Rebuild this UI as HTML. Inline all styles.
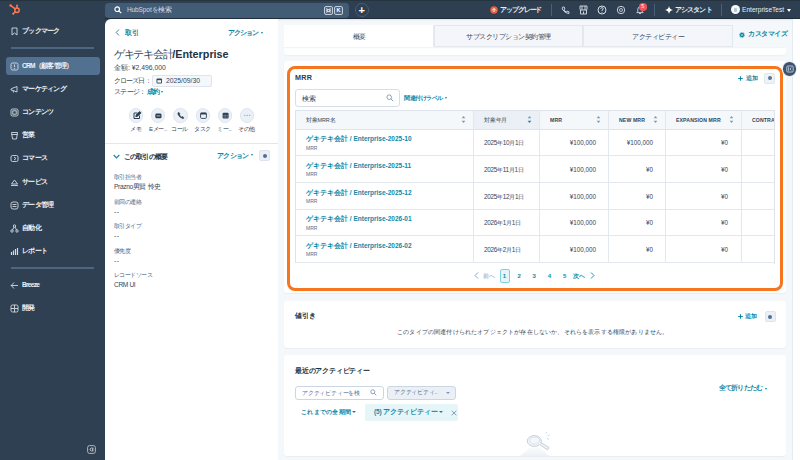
<!DOCTYPE html>
<html lang="ja">
<head>
<meta charset="utf-8">
<style>
*{box-sizing:border-box;margin:0;padding:0}
html,body{width:800px;height:460px;overflow:hidden}
body{position:relative;background:#2f4052;font-family:"Liberation Sans",sans-serif;color:#33475b;font-size:8px}
.abs{position:absolute}
.t{position:absolute;white-space:nowrap;line-height:1}
/* top bar */
#top{left:0;top:0;width:800px;height:19px;background:#2e3f51}
#search{left:105px;top:2.5px;width:244px;height:15px;background:#435c76;border-radius:4px}
.kbd{position:absolute;top:3.5px;width:9px;height:8.5px;border:1px solid #c3cdd8;border-radius:2px;background:#4d6784;color:#fff;font-size:5.5px;font-weight:bold;text-align:center;line-height:6.5px}
#plus{left:354.5px;top:2.5px;width:14.5px;height:14.5px;border:1px solid #465d76;border-radius:50%;color:#fff;font-size:11px;font-weight:bold;text-align:center;line-height:12.5px}
.tw{color:#e9eef3;font-size:6.5px}
.vdiv{position:absolute;top:3.5px;width:1.3px;height:12px;background:#4a6079}
/* sidebar */
#side{left:0;top:19px;width:105px;height:441px;background:#2f4052}
.si{position:absolute;left:22px;color:#f0f3f7;font-size:6.6px;font-weight:bold;letter-spacing:-0.75px;line-height:1;white-space:nowrap}
.sic{position:absolute;left:11px;width:8px;height:8px;border:1px solid #c4ccd5;border-radius:2px}
.hr{position:absolute;left:11px;width:83px;height:1.5px;background:#4d6580}

.act{position:absolute;top:89.3px;width:14.4px;height:14.4px;border-radius:50%;background:#eaf0f6;border:1px solid #dde6ef}
.al{top:107px;color:#33475b;font-size:6px;letter-spacing:-0.3px}
.fl{left:9px;color:#48637f;font-size:5.8px;letter-spacing:-0.55px}
.fv{left:9px;color:#33475b;font-size:6.6px;letter-spacing:-0.35px}
.tab{top:5.5px;height:22px;border:1px solid #e3e8ee;background:#f4f6f9;color:#33475b;font-size:6.5px;text-align:center;line-height:21px;letter-spacing:-0.5px}
.pg{top:254px;color:#0e89a8;font-size:6px;font-weight:bold}
</style>
</head>
<body>
<div id="top" class="abs">
  <div class="abs" style="left:0;top:0;width:800px;height:1.3px;background:#26343f"></div><svg class="abs" style="left:9px;top:4px" width="12" height="11" viewBox="0 0 12 11"><g stroke="#f9794f" stroke-width="1.5" fill="none" stroke-linecap="round"><circle cx="8" cy="6.3" r="2.2"/><line x1="8" y1="4" x2="8" y2="1.8"/><line x1="6.2" y1="4.9" x2="1.8" y2="1.6"/><line x1="6.4" y1="7.9" x2="4.3" y2="9.6"/></g><g fill="#f9794f"><circle cx="1.6" cy="1.4" r="1.2"/><circle cx="4.2" cy="9.7" r="1"/><circle cx="8" cy="1.3" r="0.9"/></g></svg>
  <div id="search" class="abs">
    <svg class="abs" style="left:9px;top:3.5px" width="8" height="8" viewBox="0 0 8 8"><circle cx="3.2" cy="3.2" r="2.3" stroke="#fff" stroke-width="1.2" fill="none"/><line x1="4.9" y1="4.9" x2="7.2" y2="7.2" stroke="#fff" stroke-width="1.2"/></svg>
    <div class="t" style="left:22px;top:4.5px;color:#d0dae4;font-size:6.5px;letter-spacing:-0.1px">HubSpotを検索</div>
    <div class="kbd" style="left:219px"><svg style="position:absolute;left:1.3px;top:1.2px" width="5" height="5" viewBox="0 0 5 5"><path d="M1.5 1.5 L3.5 1.5 L3.5 3.5 L1.5 3.5 Z M1.5 1.5 A0.8 0.8 0 1 0 0.7 2.3 M3.5 1.5 A0.8 0.8 0 1 1 4.3 2.3 M3.5 3.5 A0.8 0.8 0 1 0 4.3 2.7 M1.5 3.5 A0.8 0.8 0 1 1 0.7 2.7" fill="none" stroke="#fff" stroke-width="0.7"/></svg></div>
    <div class="kbd" style="left:229px">K</div>
  </div>
  <div id="plus" class="abs">+</div>
  <svg class="abs" style="left:490px;top:6px" width="8" height="8" viewBox="0 0 8 8"><circle cx="4" cy="4" r="3.7" fill="#e8613e"/><path d="M2 4.5 L4 2.5 L6 4.5 M4 2.5 L4 6" stroke="#fff" stroke-width="0.9" fill="none"/></svg>
  <div class="t tw" style="left:500px;top:6.5px;letter-spacing:-1.1px;font-weight:bold">アップグレード</div>
  <div class="vdiv" style="left:551px"></div>
  <svg class="abs" style="left:561px;top:5.5px" width="9" height="9" viewBox="0 0 9 9"><path d="M1.8 1 L3.2 1 L3.9 3 L3 3.7 Q3.8 5.4 5.3 6 L6 5.1 L8 5.8 L7.9 7.6 Q4 7.6 1.2 3 Q1 1.6 1.8 1 Z" fill="none" stroke="#d7dfe8" stroke-width="0.9"/></svg>
  <svg class="abs" style="left:579px;top:5px" width="9" height="10" viewBox="0 0 9 10"><path d="M1 1 L8 1 L8 4 Q8 5 7 5 L2 5 Q1 5 1 4 Z" fill="none" stroke="#d7dfe8" stroke-width="0.9"/><path d="M1.5 5 L1.5 9 L7.5 9 L7.5 5 M3 1 L3 5 M6 1 L6 5 M4.5 6.5 L4.5 9" fill="none" stroke="#d7dfe8" stroke-width="0.9"/></svg>
  <svg class="abs" style="left:597px;top:5px" width="10" height="10" viewBox="0 0 10 10"><circle cx="5" cy="5" r="4" fill="none" stroke="#d7dfe8" stroke-width="1"/><path d="M3.6 3.8 Q3.8 2.6 5 2.6 Q6.3 2.6 6.3 3.8 Q6.3 4.6 5 5 L5 6" fill="none" stroke="#d7dfe8" stroke-width="0.9"/><circle cx="5" cy="7.3" r="0.5" fill="#d7dfe8"/></svg>
  <svg class="abs" style="left:616px;top:5px" width="10" height="10" viewBox="0 0 10 10"><circle cx="5" cy="5" r="3.7" fill="none" stroke="#d7dfe8" stroke-width="0.9"/><circle cx="5" cy="5" r="1.5" fill="none" stroke="#d7dfe8" stroke-width="0.8"/></svg>
  <svg class="abs" style="left:635px;top:5px" width="10" height="10" viewBox="0 0 10 10"><path d="M1.8 7.6 L2.8 6.5 L2.8 4.3 Q3 1.8 5 1.8 Q7 1.8 7.2 4.3 L7.2 6.5 L8.2 7.6 Z M4 8.3 Q5 9.4 6 8.3" fill="none" stroke="#d7dfe8" stroke-width="0.9"/></svg>
  <div class="abs" style="left:639px;top:3px;width:7.5px;height:7.5px;border-radius:50%;background:#f2545b;color:#fff;font-size:5px;text-align:center;line-height:7.5px">5</div>
  <div class="vdiv" style="left:654px"></div>
  <svg class="abs" style="left:664.5px;top:5.5px" width="8" height="8" viewBox="0 0 8 8"><path d="M4 0 Q4.5 3.5 8 4 Q4.5 4.5 4 8 Q3.5 4.5 0 4 Q3.5 3.5 4 0 Z" fill="#fff"/></svg>
  <div class="t tw" style="left:675px;top:6.5px;letter-spacing:-0.9px;font-weight:bold">アシスタント</div>
  <div class="vdiv" style="left:721px"></div>
  <div class="abs" style="left:731px;top:5px;width:9px;height:9px;border-radius:50%;background:#f5f8fa"></div>
  <div class="abs" style="left:734px;top:7.5px;width:3px;height:4px;border-radius:1px;background:#b9c6d4"></div>
  <div class="t tw" style="left:742px;top:6.5px;font-size:6.6px">EnterpriseTest</div>
  <div class="abs" style="left:787px;top:8.5px;width:0;height:0;border-left:2.5px solid transparent;border-right:2.5px solid transparent;border-top:3px solid #fff"></div>
</div>

<div class="abs" style="left:105px;top:18px;width:695px;height:1px;background:#1f2d3b"></div>
<div class="abs" style="left:104px;top:18px;width:1px;height:442px;background:#263544"></div>
<div id="side" class="abs">
<svg class="abs" style="left:10px;top:8px" width="9" height="9" viewBox="0 0 9 9"><g fill="none" stroke="#d3dae2" stroke-width="0.9"><path d="M2 1 L7 1 L7 8 L4.5 6 L2 8 Z"/></g></svg>
<div class="si" style="top:9px">ブックマーク</div>
<div class="hr" style="top:28px"></div>
<div class="abs" style="left:5.5px;top:37.5px;width:94px;height:18px;border-radius:3px;background:#52708f"></div>
<svg class="abs" style="left:10px;top:43px" width="9" height="9" viewBox="0 0 9 9"><g fill="none" stroke="#d3dae2" stroke-width="0.9"><rect x="1" y="1" width="7" height="7" rx="1.5"/><path d="M4.5 2.5 L4.5 5" /><circle cx="4.5" cy="6.3" r="0.3"/></g></svg>
<div class="si" style="top:44px">CRM（顧客管理）</div>
<svg class="abs" style="left:10px;top:66px" width="9" height="9" viewBox="0 0 9 9"><g fill="none" stroke="#d3dae2" stroke-width="0.9"><path d="M1 4 L3 3 L7 1.5 L7 7 L3 5.5 L1 5 Z M3 5.5 L3.5 7.5"/></g></svg>
<div class="si" style="top:67px">マーケティング</div>
<svg class="abs" style="left:10px;top:89px" width="9" height="9" viewBox="0 0 9 9"><g fill="none" stroke="#d3dae2" stroke-width="0.9"><rect x="1" y="1" width="7" height="7" rx="1.5"/><rect x="2.8" y="2.8" width="3.4" height="3.4"/></g></svg>
<div class="si" style="top:90px">コンテンツ</div>
<svg class="abs" style="left:10px;top:112px" width="9" height="9" viewBox="0 0 9 9"><g fill="none" stroke="#d3dae2" stroke-width="0.9"><path d="M1.5 1.5 L7.5 1.5 L6.5 8 L2.5 8 Z M1.5 3.5 L7.5 3.5"/></g></svg>
<div class="si" style="top:113px">営業</div>
<svg class="abs" style="left:10px;top:135px" width="9" height="9" viewBox="0 0 9 9"><g fill="none" stroke="#d3dae2" stroke-width="0.9"><rect x="1" y="1.5" width="7" height="6" rx="1.5"/><path d="M4 3 L6 4.5 L4 6"/></g></svg>
<div class="si" style="top:136px">コマース</div>
<svg class="abs" style="left:10px;top:159px" width="9" height="9" viewBox="0 0 9 9"><g fill="none" stroke="#d3dae2" stroke-width="0.9"><path d="M1 7.5 L8 7.5 M1.5 6 L4.5 2 L7.5 6 Z"/></g></svg>
<div class="si" style="top:160px">サービス</div>
<svg class="abs" style="left:10px;top:182px" width="9" height="9" viewBox="0 0 9 9"><g fill="none" stroke="#d3dae2" stroke-width="0.9"><rect x="1" y="1" width="7" height="7" rx="2"/><path d="M2.5 3.5 L6.5 3.5 M2.5 5.5 L6.5 5.5"/></g></svg>
<div class="si" style="top:183px">データ管理</div>
<svg class="abs" style="left:10px;top:205px" width="9" height="9" viewBox="0 0 9 9"><g fill="none" stroke="#d3dae2" stroke-width="0.9"><circle cx="4.5" cy="2" r="1.2"/><circle cx="2" cy="7" r="1.2"/><circle cx="7" cy="7" r="1.2"/><path d="M4 3 L2.5 6 M5 3 L6.5 6"/></g></svg>
<div class="si" style="top:206px">自動化</div>
<svg class="abs" style="left:10px;top:228px" width="9" height="9" viewBox="0 0 9 9"><g fill="none" stroke="#d3dae2" stroke-width="0.9"><path d="M1.5 8 L1.5 5 M3.5 8 L3.5 3.5 M5.5 8 L5.5 2 M7.5 8 L7.5 1" stroke-width="1.2"/></g></svg>
<div class="si" style="top:229px">レポート</div>
<div class="hr" style="top:248px"></div>
<svg class="abs" style="left:10px;top:262px" width="9" height="9" viewBox="0 0 9 9"><g fill="none" stroke="#d3dae2" stroke-width="0.9"><path d="M1 4.5 L8 4.5 M4 1.5 L1.2 4.5 L4 7.5"/></g></svg>
<div class="si" style="top:263px">Breeze</div>
<svg class="abs" style="left:10px;top:285px" width="9" height="9" viewBox="0 0 9 9"><g fill="none" stroke="#d3dae2" stroke-width="0.9"><rect x="1" y="1" width="7" height="7" rx="1.5"/><path d="M1 4.5 L8 4.5 M4.5 1 L4.5 8"/></g></svg>
<div class="si" style="top:286px">開発</div>
<svg class="abs" style="left:86.5px;top:425.5px" width="9" height="9" viewBox="0 0 9 9"><rect x="0.6" y="0.6" width="7.8" height="7.8" rx="2" fill="none" stroke="#b9c3ce" stroke-width="0.9"/><path d="M4.6 2.6 L3 4.5 L4.6 6.4 M5.8 2.6 L5.8 6.4" fill="none" stroke="#dfe5eb" stroke-width="1"/></svg>
</div>

<!-- LEFT PANEL -->
<div id="left" class="abs" style="left:105px;top:19px;width:173px;height:441px;background:#fff;border-top-left-radius:6px;overflow:hidden">
  <svg class="abs" style="left:10px;top:10px" width="5" height="7" viewBox="0 0 5 7"><path d="M4 0.5 L1.2 3.5 L4 6.5" fill="none" stroke="#516f90" stroke-width="0.9"/></svg>
  <div class="t" style="left:20px;top:10px;color:#0e89a8;font-size:7px;font-weight:bold;letter-spacing:-0.5px">取引</div>
  <div class="t" style="left:123px;top:11px;color:#0e89a8;font-size:6.8px;font-weight:bold;letter-spacing:-0.9px">アクション</div>
  <div class="abs" style="left:155.7px;top:12.5px;border-left:1.9px solid transparent;border-right:1.9px solid transparent;border-top:2.4px solid #0e89a8"></div>
  <div class="t" style="left:9px;top:30px;color:#33475b;font-size:10.5px;letter-spacing:-1.3px">ゲキテキ会計<b style="font-size:10.8px;letter-spacing:0;color:#213343">/Enterprise</b></div>
  <div class="t" style="left:9px;top:46px;color:#33475b;font-size:6.8px">金額: ¥2,496,000</div>
  <div class="t" style="left:9px;top:59px;color:#33475b;font-size:6.6px;letter-spacing:-0.9px">クローズ日：</div>
  <div class="abs" style="left:47px;top:55.5px;width:60px;height:12px;border:1px solid #dfe3eb;border-radius:2px;background:#f5f8fa"></div>
  <svg class="abs" style="left:50.5px;top:58.5px" width="7" height="6" viewBox="0 0 7 6"><rect x="0.5" y="0.5" width="5.5" height="5" rx="1" fill="#33475b"/><rect x="1.4" y="2.2" width="3.7" height="2.4" fill="#f5f8fa"/></svg>
  <div class="t" style="left:61px;top:58.5px;color:#33475b;font-size:6.8px">2025/09/30</div>
  <div class="t" style="left:9px;top:70px;color:#33475b;font-size:6.6px;letter-spacing:-0.7px">ステージ：</div>
  <div class="t" style="left:42px;top:70px;color:#0e89a8;font-size:6.6px;font-weight:bold;letter-spacing:-0.6px">成約</div>
  <div class="abs" style="left:55.8px;top:72px;border-left:1.8px solid transparent;border-right:1.8px solid transparent;border-top:2.4px solid #0e89a8"></div>
  <!-- action icons -->
  <div class="act" style="left:23.8px"></div><div class="act" style="left:45.8px"></div><div class="act" style="left:68.2px"></div><div class="act" style="left:90.6px"></div><div class="act" style="left:112.6px"></div><div class="act" style="left:135px"></div>
  <svg class="abs" style="left:0px;top:85px" width="170" height="20" viewBox="0 0 170 20">
    <g fill="none" stroke="#2d3e50" stroke-width="1">
      <path d="M32.5 9 L29 9 L29 14.5 L34.5 14.5 L34.5 11.5"/>
      <path d="M30.8 12.6 L31.2 11 L34.6 7.6 L35.9 8.9 L32.5 12.3 Z" fill="#2d3e50"/>
      <rect x="50.3" y="9.6" width="6.2" height="4.6" rx="1.3" fill="#2d3e50" stroke="none"/>
      <path d="M51.5 11.9 L55.3 11.9" stroke="#eaf0f6" stroke-width="0.7"/>
      <path d="M73.6 8.2 Q72.5 8.8 73 10.5 Q74.5 13.8 77.6 14.6 Q78.8 14.7 79 13.7 L77.4 12.5 L76.6 13.1 Q75 12.2 74.5 10.7 L75.2 10 Z" fill="#2d3e50" stroke-width="0.5"/>
      <rect x="95.6" y="9" width="5.8" height="5.4" rx="1" stroke-width="0.9"/>
      <path d="M95.6 9.6 L101.4 9.6" stroke-width="1.6"/>
      <rect x="117.6" y="8.8" width="6" height="5.8" rx="1" fill="#2d3e50" stroke="none"/>
      <path d="M118.6 11.3 L122.6 11.3 M118.6 13 L122.6 13" stroke="#eaf0f6" stroke-width="0.6" stroke-dasharray="1 0.6"/>
    </g>
    <g fill="#7c98b6"><circle cx="139.8" cy="11.3" r="0.65"/><circle cx="142.2" cy="11.3" r="0.65"/><circle cx="144.6" cy="11.3" r="0.65"/></g>
  </svg>
  <div class="t al" style="left:25px">メモ</div>
  <div class="t al" style="left:44px">Eメー..</div>
  <div class="t al" style="left:66px">コール</div>
  <div class="t al" style="left:89px">タスク</div>
  <div class="t al" style="left:112px">ミー..</div>
  <div class="t al" style="left:133px">その他</div>
  <div class="abs" style="left:0;top:124px;width:173px;height:1px;background:#e1e7ee"></div>
  <svg class="abs" style="left:8px;top:135px" width="7" height="5" viewBox="0 0 7 5"><path d="M0.7 1 L3.5 3.8 L6.3 1" fill="none" stroke="#0e89a8" stroke-width="1.2"/></svg>
  <div class="t" style="left:19px;top:133.5px;color:#213343;font-size:7px;font-weight:bold;letter-spacing:-0.85px">この取引の概要</div>
  <div class="t" style="left:112px;top:133.5px;color:#0e89a8;font-size:6.8px;font-weight:bold;letter-spacing:-0.75px">アクション</div>
  <div class="abs" style="left:145.5px;top:135px;border-left:1.9px solid transparent;border-right:1.9px solid transparent;border-top:2.4px solid #0e89a8"></div>
  <div class="abs" style="left:154px;top:131px;width:11px;height:11px;background:#eaf0f6;border:1px solid #dfe3eb;border-radius:2px"></div>
  <div class="abs" style="left:157.5px;top:134.5px;width:4px;height:4px;border-radius:50%;background:#516f90"></div>
  <div class="t fl" style="top:156px">取引担当者</div>
  <div class="t fv" style="top:165px">Prazno男賢 怜史</div>
  <div class="t fl" style="top:180.5px">前回の連絡</div>
  <div class="t fv" style="top:189.5px;letter-spacing:0.6px">--</div>
  <div class="t fl" style="top:205px">取引タイプ</div>
  <div class="t fv" style="top:214px;letter-spacing:0.6px">--</div>
  <div class="t fl" style="top:229.5px">優先度</div>
  <div class="t fv" style="top:238.5px;letter-spacing:0.6px">--</div>
  <div class="t fl" style="top:254px">レコードソース</div>
  <div class="t fv" style="top:263px">CRM UI</div>
</div>

<!-- RIGHT AREA -->
<div id="main" class="abs" style="left:278px;top:19px;width:514px;height:441px;background:#f5f8fa;overflow:hidden">
  <!-- tabs -->
  <div class="abs" style="left:0;top:0;width:514px;height:2px;background:linear-gradient(#dde3e9,#f5f8fa)"></div>
  <div class="abs" style="left:6px;top:5.5px;width:449px;height:22px;background:#fff"></div>
  <div class="abs tab" style="left:6px;width:150px;background:#fff;border-color:#fff;border-right-color:#e6ebf0">概要</div>
  <div class="abs tab" style="left:155.5px;width:149.5px">サブスクリプション契約管理</div>
  <div class="abs tab" style="left:305px;width:150px">アクティビティー</div>
  <div class="abs" style="left:6px;top:27.5px;width:502px;height:8.5px;background:#fdfefe;border-top:1px solid #f1f4f7;border-radius:0 0 3px 3px;box-shadow:0 1px 1px #eceff3"></div>
  <svg class="abs" style="left:461px;top:12.5px" width="6" height="6" viewBox="0 0 6 6"><circle cx="3" cy="3" r="2.2" fill="#0e89a8"/><circle cx="3" cy="3" r="2.6" fill="none" stroke="#0e89a8" stroke-width="0.8" stroke-dasharray="0.8 0.8"/><circle cx="3" cy="3" r="0.8" fill="#f5f8fa"/></svg>
  <div class="t" style="left:470px;top:11.5px;color:#0e89a8;font-size:6.8px;font-weight:bold;letter-spacing:-0.4px">カスタマイズ</div>
  <!-- MRR card -->
  <div class="abs" style="left:6px;top:42px;width:502px;height:232px;background:#fff;border-radius:3px;box-shadow:0 1px 1px #e9edf1"></div>
  <div class="abs" style="left:9px;top:47px;width:496px;height:225px;border:3px solid #f5761f;border-radius:8px"></div>
  <div class="t" style="left:17px;top:54.5px;color:#2a3b4d;font-size:7.2px;font-weight:bold;letter-spacing:0.3px">MRR</div>
  <svg class="abs" style="left:459.5px;top:56.5px" width="5" height="5" viewBox="0 0 5 5"><path d="M2.5 0.2 L2.5 4.8 M0.2 2.5 L4.8 2.5" stroke="#0e89a8" stroke-width="1.1"/></svg>
  <div class="t" style="left:467.5px;top:56.5px;color:#0e89a8;font-size:5.8px;font-weight:bold">追加</div>
  <div class="abs" style="left:486px;top:53.5px;width:11px;height:11px;background:#eef3f8;border:1px solid #dfe6ee;border-radius:2px"></div>
  <div class="abs" style="left:489.5px;top:57px;width:4px;height:4px;border-radius:50%;background:#5b7593"></div>
  <div class="abs" style="left:16.5px;top:69.5px;width:105.5px;height:18px;border:1px solid #d6dee8;border-radius:3px;background:#fff"></div>
  <div class="t" style="left:24px;top:75.5px;color:#33475b;font-size:7px">検索</div>
  <svg class="abs" style="left:108px;top:75px" width="8" height="8" viewBox="0 0 8 8"><circle cx="3.2" cy="3.2" r="2.3" stroke="#7c98b6" stroke-width="0.9" fill="none"/><line x1="4.9" y1="4.9" x2="7.2" y2="7.2" stroke="#7c98b6" stroke-width="0.9"/></svg>
  <div class="t" style="left:126px;top:75.5px;color:#0e89a8;font-size:6px;font-weight:bold;letter-spacing:-0.45px">関連付けラベル</div>
  <div class="abs" style="left:166.8px;top:78px;border-left:1.8px solid transparent;border-right:1.8px solid transparent;border-top:2.3px solid #0e89a8"></div>
  <!-- table -->
  <div id="tbl" class="abs" style="left:17px;top:91px;width:480px;height:154px;overflow:hidden;border-right:1px solid #dfe3eb">
<div class="abs" style="left:0;top:0;width:480px;height:19.5px;background:#f5f8fa;border:1px solid #dfe3eb;border-right:0"></div>
<div class="abs" style="left:178px;top:0;width:66px;height:19.5px;background:#eaf0f6;border-top:1px solid #dfe3eb;border-bottom:1px solid #dfe3eb"></div>
<div class="abs" style="left:178px;top:0;width:1px;height:19.5px;background:#e3e8ee"></div>
<div class="abs" style="left:244px;top:0;width:1px;height:19.5px;background:#e3e8ee"></div>
<div class="abs" style="left:313px;top:0;width:1px;height:19.5px;background:#e3e8ee"></div>
<div class="abs" style="left:370px;top:0;width:1px;height:19.5px;background:#e3e8ee"></div>
<div class="abs" style="left:446px;top:0;width:1px;height:19.5px;background:#e3e8ee"></div>
<div class="t" style="left:11px;top:7.5px;color:#33475b;font-size:5.5px;letter-spacing:-0.2px">対象MRR名</div>
<svg class="abs" style="left:166px;top:5px" width="5" height="9" viewBox="0 0 5 9"><path d="M2.5 1 L4.3 3.3 L0.7 3.3 Z" fill="#7c98b6"/><path d="M2.5 8 L4.3 5.7 L0.7 5.7 Z" fill="#7c98b6"/></svg>
<div class="t" style="left:189px;top:7.5px;color:#33475b;font-size:5.5px;letter-spacing:-0.2px">対象年月</div>
<svg class="abs" style="left:232px;top:5px" width="5" height="9" viewBox="0 0 5 9"><path d="M2.5 1 L4.3 3.3 L0.7 3.3 Z" fill="#7c98b6"/><path d="M2.5 8 L4.3 5.7 L0.7 5.7 Z" fill="#0e89a8"/></svg>
<div class="t" style="left:255px;top:7.5px;color:#33475b;font-size:5.2px;font-weight:bold;letter-spacing:0.1px">MRR</div>
<svg class="abs" style="left:301px;top:5px" width="5" height="9" viewBox="0 0 5 9"><path d="M2.5 1 L4.3 3.3 L0.7 3.3 Z" fill="#7c98b6"/><path d="M2.5 8 L4.3 5.7 L0.7 5.7 Z" fill="#7c98b6"/></svg>
<div class="t" style="left:324px;top:7.5px;color:#33475b;font-size:5.2px;font-weight:bold;letter-spacing:0.1px">NEW MRR</div>
<svg class="abs" style="left:358px;top:5px" width="5" height="9" viewBox="0 0 5 9"><path d="M2.5 1 L4.3 3.3 L0.7 3.3 Z" fill="#7c98b6"/><path d="M2.5 8 L4.3 5.7 L0.7 5.7 Z" fill="#7c98b6"/></svg>
<div class="t" style="left:381px;top:7.5px;color:#33475b;font-size:5.2px;font-weight:bold;letter-spacing:0.1px">EXPANSION MRR</div>
<svg class="abs" style="left:434px;top:5px" width="5" height="9" viewBox="0 0 5 9"><path d="M2.5 1 L4.3 3.3 L0.7 3.3 Z" fill="#7c98b6"/><path d="M2.5 8 L4.3 5.7 L0.7 5.7 Z" fill="#7c98b6"/></svg>
<div class="t" style="left:457px;top:7.5px;color:#33475b;font-size:5.2px;font-weight:bold;letter-spacing:0.1px">CONTRACTION MRR</div>
<div class="abs" style="left:0;top:19.5px;width:480px;height:26.5px;border-left:1px solid #dfe3eb;border-bottom:1px solid #e3e8ee"></div>
<div class="abs" style="left:178px;top:19.5px;width:1px;height:26.5px;background:#e3e8ee"></div>
<div class="abs" style="left:244px;top:19.5px;width:1px;height:26.5px;background:#e3e8ee"></div>
<div class="abs" style="left:313px;top:19.5px;width:1px;height:26.5px;background:#e3e8ee"></div>
<div class="abs" style="left:370px;top:19.5px;width:1px;height:26.5px;background:#e3e8ee"></div>
<div class="abs" style="left:446px;top:19.5px;width:1px;height:26.5px;background:#e3e8ee"></div>
<div class="t" style="left:11px;top:26.0px;color:#0e89a8;font-size:6.5px;font-weight:bold;letter-spacing:0px">ゲキテキ会計 / Enterprise-2025-10</div>
<div class="t" style="left:11px;top:35.5px;color:#516f90;font-size:5px">MRR</div>
<div class="t" style="left:189px;top:30.0px;color:#33475b;font-size:6.4px;letter-spacing:-0.3px">2025年10月1日</div>
<div class="t" style="right:178px;top:30.0px;color:#33475b;font-size:6.3px">¥100,000</div>
<div class="t" style="right:121px;top:30.0px;color:#33475b;font-size:6.3px">¥100,000</div>
<div class="t" style="right:46px;top:30.0px;color:#33475b;font-size:6.3px">¥0</div>
<div class="abs" style="left:0;top:46px;width:480px;height:27px;border-left:1px solid #dfe3eb;border-bottom:1px solid #e3e8ee"></div>
<div class="abs" style="left:178px;top:46px;width:1px;height:27px;background:#e3e8ee"></div>
<div class="abs" style="left:244px;top:46px;width:1px;height:27px;background:#e3e8ee"></div>
<div class="abs" style="left:313px;top:46px;width:1px;height:27px;background:#e3e8ee"></div>
<div class="abs" style="left:370px;top:46px;width:1px;height:27px;background:#e3e8ee"></div>
<div class="abs" style="left:446px;top:46px;width:1px;height:27px;background:#e3e8ee"></div>
<div class="t" style="left:11px;top:52.5px;color:#0e89a8;font-size:6.5px;font-weight:bold;letter-spacing:0px">ゲキテキ会計 / Enterprise-2025-11</div>
<div class="t" style="left:11px;top:62px;color:#516f90;font-size:5px">MRR</div>
<div class="t" style="left:189px;top:56.5px;color:#33475b;font-size:6.4px;letter-spacing:-0.3px">2025年11月1日</div>
<div class="t" style="right:178px;top:56.5px;color:#33475b;font-size:6.3px">¥100,000</div>
<div class="t" style="right:121px;top:56.5px;color:#33475b;font-size:6.3px">¥0</div>
<div class="t" style="right:46px;top:56.5px;color:#33475b;font-size:6.3px">¥0</div>
<div class="abs" style="left:0;top:73px;width:480px;height:26.5px;border-left:1px solid #dfe3eb;border-bottom:1px solid #e3e8ee"></div>
<div class="abs" style="left:178px;top:73px;width:1px;height:26.5px;background:#e3e8ee"></div>
<div class="abs" style="left:244px;top:73px;width:1px;height:26.5px;background:#e3e8ee"></div>
<div class="abs" style="left:313px;top:73px;width:1px;height:26.5px;background:#e3e8ee"></div>
<div class="abs" style="left:370px;top:73px;width:1px;height:26.5px;background:#e3e8ee"></div>
<div class="abs" style="left:446px;top:73px;width:1px;height:26.5px;background:#e3e8ee"></div>
<div class="t" style="left:11px;top:79.5px;color:#0e89a8;font-size:6.5px;font-weight:bold;letter-spacing:0px">ゲキテキ会計 / Enterprise-2025-12</div>
<div class="t" style="left:11px;top:89px;color:#516f90;font-size:5px">MRR</div>
<div class="t" style="left:189px;top:83.5px;color:#33475b;font-size:6.4px;letter-spacing:-0.3px">2025年12月1日</div>
<div class="t" style="right:178px;top:83.5px;color:#33475b;font-size:6.3px">¥100,000</div>
<div class="t" style="right:121px;top:83.5px;color:#33475b;font-size:6.3px">¥0</div>
<div class="t" style="right:46px;top:83.5px;color:#33475b;font-size:6.3px">¥0</div>
<div class="abs" style="left:0;top:99.5px;width:480px;height:26.5px;border-left:1px solid #dfe3eb;border-bottom:1px solid #e3e8ee"></div>
<div class="abs" style="left:178px;top:99.5px;width:1px;height:26.5px;background:#e3e8ee"></div>
<div class="abs" style="left:244px;top:99.5px;width:1px;height:26.5px;background:#e3e8ee"></div>
<div class="abs" style="left:313px;top:99.5px;width:1px;height:26.5px;background:#e3e8ee"></div>
<div class="abs" style="left:370px;top:99.5px;width:1px;height:26.5px;background:#e3e8ee"></div>
<div class="abs" style="left:446px;top:99.5px;width:1px;height:26.5px;background:#e3e8ee"></div>
<div class="t" style="left:11px;top:106.0px;color:#0e89a8;font-size:6.5px;font-weight:bold;letter-spacing:0px">ゲキテキ会計 / Enterprise-2026-01</div>
<div class="t" style="left:11px;top:115.5px;color:#516f90;font-size:5px">MRR</div>
<div class="t" style="left:189px;top:110.0px;color:#33475b;font-size:6.4px;letter-spacing:-0.3px">2026年1月1日</div>
<div class="t" style="right:178px;top:110.0px;color:#33475b;font-size:6.3px">¥100,000</div>
<div class="t" style="right:121px;top:110.0px;color:#33475b;font-size:6.3px">¥0</div>
<div class="t" style="right:46px;top:110.0px;color:#33475b;font-size:6.3px">¥0</div>
<div class="abs" style="left:0;top:126px;width:480px;height:27px;border-left:1px solid #dfe3eb;border-bottom:1px solid #e3e8ee"></div>
<div class="abs" style="left:178px;top:126px;width:1px;height:27px;background:#e3e8ee"></div>
<div class="abs" style="left:244px;top:126px;width:1px;height:27px;background:#e3e8ee"></div>
<div class="abs" style="left:313px;top:126px;width:1px;height:27px;background:#e3e8ee"></div>
<div class="abs" style="left:370px;top:126px;width:1px;height:27px;background:#e3e8ee"></div>
<div class="abs" style="left:446px;top:126px;width:1px;height:27px;background:#e3e8ee"></div>
<div class="t" style="left:11px;top:132.5px;color:#0e89a8;font-size:6.5px;font-weight:bold;letter-spacing:0px">ゲキテキ会計 / Enterprise-2026-02</div>
<div class="t" style="left:11px;top:142px;color:#516f90;font-size:5px">MRR</div>
<div class="t" style="left:189px;top:136.5px;color:#33475b;font-size:6.4px;letter-spacing:-0.3px">2026年2月1日</div>
<div class="t" style="right:178px;top:136.5px;color:#33475b;font-size:6.3px">¥100,000</div>
<div class="t" style="right:121px;top:136.5px;color:#33475b;font-size:6.3px">¥0</div>
<div class="t" style="right:46px;top:136.5px;color:#33475b;font-size:6.3px">¥0</div>
  </div>
  <!-- pagination -->
  <svg class="abs" style="left:196px;top:253px" width="5" height="7" viewBox="0 0 5 7"><path d="M4 0.5 L1 3.5 L4 6.5" fill="none" stroke="#7c98b6" stroke-width="0.9"/></svg>
  <div class="t" style="left:205px;top:254px;color:#7c98b6;font-size:6px">前へ</div>
  <div class="abs" style="left:222px;top:250px;width:10px;height:14px;border:1px solid #7fd1de;border-radius:2px;background:#e5f5f8"></div>
  <div class="t pg" style="left:224.8px">1</div>
  <div class="t pg" style="left:239.5px">2</div>
  <div class="t pg" style="left:254.5px">3</div>
  <div class="t pg" style="left:269.8px">4</div>
  <div class="t pg" style="left:285px">5</div>
  <div class="t" style="left:295px;top:254px;color:#0e89a8;font-size:6px;font-weight:bold">次へ</div>
  <svg class="abs" style="left:312px;top:253px" width="5" height="7" viewBox="0 0 5 7"><path d="M1 0.5 L4 3.5 L1 6.5" fill="none" stroke="#0e89a8" stroke-width="0.9"/></svg>
  <!-- discount card -->
  <div class="abs" style="left:6px;top:281.5px;width:502px;height:47px;background:#fff;border-radius:3px;box-shadow:0 1px 1px #e9edf1"></div>
  <div class="t" style="left:17px;top:292.5px;color:#213343;font-size:7px;font-weight:bold">値引き</div>
  <svg class="abs" style="left:459.5px;top:295px" width="5" height="5" viewBox="0 0 5 5"><path d="M2.5 0.2 L2.5 4.8 M0.2 2.5 L4.8 2.5" stroke="#0e89a8" stroke-width="1.1"/></svg>
  <div class="t" style="left:467px;top:294px;color:#0e89a8;font-size:6px;font-weight:bold">追加</div>
  <div class="abs" style="left:486.5px;top:292px;width:11px;height:11px;background:#eaf0f6;border:1px solid #dfe3eb;border-radius:2px"></div>
  <div class="abs" style="left:490px;top:295.5px;width:4px;height:4px;border-radius:50%;background:#516f90"></div>
  <div class="t" style="left:119px;top:310px;color:#33475b;font-size:6px;letter-spacing:0.17px">このタイプの関連付けられたオブジェクトが存在しないか、それらを表示する権限がありません。</div>
  <!-- activity card -->
  <div class="abs" style="left:6px;top:336px;width:502px;height:101px;background:#fff;border-radius:3px;box-shadow:0 1px 1px #e9edf1"></div>
  <div class="t" style="left:17px;top:347.5px;color:#213343;font-size:7px;font-weight:bold;letter-spacing:-0.2px">最近のアクティビティー</div>
  <div class="abs" style="left:16.5px;top:366.5px;width:89px;height:14.5px;border:1px solid #cbd6e2;border-radius:3px;background:#fff"></div>
  <div class="t" style="left:24px;top:370.5px;color:#516f90;font-size:6px;letter-spacing:-0.2px">アクティビティーを検</div>
  <svg class="abs" style="left:92px;top:370px" width="7" height="7" viewBox="0 0 8 8"><circle cx="3.2" cy="3.2" r="2.3" stroke="#7c98b6" stroke-width="1" fill="none"/><line x1="4.9" y1="4.9" x2="7.2" y2="7.2" stroke="#7c98b6" stroke-width="1"/></svg>
  <div class="abs" style="left:109px;top:366.5px;width:69px;height:14.5px;border:1px solid #cbd6e2;border-radius:3px;background:#eaf0f6"></div>
  <div class="t" style="left:116px;top:371px;color:#516f90;font-size:5.5px;letter-spacing:-0.2px">アクティビティ..</div>
  <div class="abs" style="left:167.5px;top:373px;border-left:2px solid transparent;border-right:2px solid transparent;border-top:2px solid #7c98b6"></div>
  <div class="t" style="left:440.5px;top:366px;color:#0e89a8;font-size:6.5px;font-weight:bold;letter-spacing:-0.7px">全て折りたたむ</div>
  <div class="abs" style="left:486.5px;top:368.5px;border-left:1.8px solid transparent;border-right:1.8px solid transparent;border-top:2.3px solid #0e89a8"></div>
  <div class="t" style="left:23px;top:389.5px;color:#0e89a8;font-size:6px;font-weight:bold;letter-spacing:0.25px">これまでの全期間</div>
  <div class="abs" style="left:74px;top:392px;border-left:2px solid transparent;border-right:2px solid transparent;border-top:2.5px solid #0e89a8"></div>
  <div class="abs" style="left:87px;top:385px;width:93px;height:17px;background:#e5f5f8;border-radius:2px"></div>
  <div class="t" style="left:96px;top:389.5px;color:#0e89a8;font-size:6.5px;font-weight:bold;letter-spacing:-0.2px">(5) アクティビティー</div>
  <div class="abs" style="left:160.5px;top:392px;border-left:2px solid transparent;border-right:2px solid transparent;border-top:2.5px solid #0e89a8"></div>
  <svg class="abs" style="left:172.5px;top:390.5px" width="6" height="6" viewBox="0 0 6 6"><path d="M0.7 0.7 L5.3 5.3 M5.3 0.7 L0.7 5.3" stroke="#7c98b6" stroke-width="0.9"/></svg>
  <svg class="abs" style="left:236px;top:408px" width="50" height="29" viewBox="0 0 50 29">
    <defs><linearGradient id="beam" x1="0" y1="0" x2="0" y2="1"><stop offset="0" stop-color="#eef2f7" stop-opacity="0.3"/><stop offset="1" stop-color="#e6ecf3"/></linearGradient></defs>
    <path d="M17 20 L1 33 L40 33 L25 20 Z" fill="url(#beam)"/>
    <g fill="none" stroke="#c3d0de" stroke-width="1">
      <ellipse cx="20.3" cy="14" rx="7" ry="5.4" fill="#f4f7fa"/><ellipse cx="20.5" cy="13.6" rx="5" ry="3.6" stroke-width="0.6"/>
      <path d="M25.5 17.5 L33.5 22.8 L35 20.5 L27 15.6" fill="#eef2f6"/>
      <path d="M32 6.5 L33 4.8 M33.5 9 L35.5 8 M33 11.5 L35 12.3" stroke-width="0.8"/>
    </g>
  </svg>
</div>
<div class="abs" style="left:792px;top:19px;width:8px;height:441px;background:#fff;border-left:1px solid #e6ebf1"></div>
<div class="abs" style="left:781.5px;top:61px;width:15.5px;height:15.5px;border-radius:50%;background:#3b5470;border:1.5px solid #fff"></div>
<svg class="abs" style="left:785.5px;top:65px" width="8" height="8" viewBox="0 0 8 8"><rect x="0.8" y="1" width="6.4" height="6" rx="1" fill="none" stroke="#d5dee8" stroke-width="0.8"/><path d="M2.6 2.2 L2.6 5.8 M5.4 2.6 L3.9 4 L5.4 5.4" fill="none" stroke="#d5dee8" stroke-width="0.8"/></svg>
</body>
</html>
